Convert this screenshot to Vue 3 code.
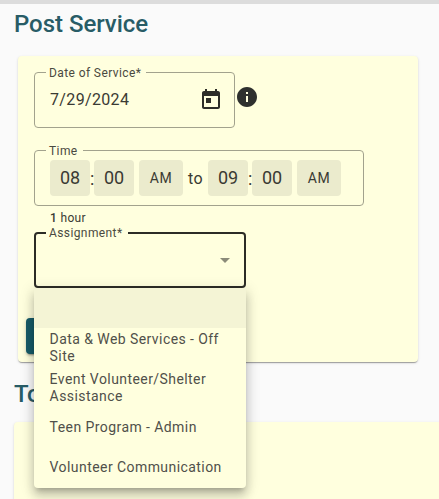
<script setup>
import { ref } from 'vue'

const options = ref([
  '',
  'Data & Web Services - Off Site',
  'Event Volunteer/Shelter Assistance',
  'Teen Program - Admin',
  'Volunteer Communication',
])
</script>

<template>
  <main class="page">
    <h2 class="title">Post Service</h2>

    <section class="card form">
      <div class="date-row">
        <div class="field date">
          <span class="label">Date of Service*</span>
          <span class="value">7/29/2024</span>
          <svg class="calendar" viewBox="0 0 24 24">
            <path d="M19 3h-1V1h-2v2H8V1H6v2H5c-1.11 0-1.99.9-1.99 2L3 19c0 1.1.89 2 2 2h14c1.1 0 2-.9 2-2V5c0-1.1-.9-2-2-2zm0 16H5V8h14v11zM7 10h5v5H7z" />
          </svg>
        </div>
        <svg class="info" viewBox="0 0 24 24">
          <path d="M12 2C6.48 2 2 6.48 2 12s4.480 10 10 10 10-4.480 10-10S17.520 2 12 2zm1 15h-2v-6h2v6zm0-8h-2V7h2v2z" />
        </svg>
      </div>

      <div class="field time">
        <span class="label">Time</span>
        <span class="chip">08</span>
        <span class="colon">:</span>
        <span class="chip">00</span>
        <span class="chip meridiem">AM</span>
        <span class="to">to</span>
        <span class="chip">09</span>
        <span class="colon">:</span>
        <span class="chip">00</span>
        <span class="chip meridiem">AM</span>
      </div>

      <div class="hint"><b>1</b> hour</div>

      <div class="field select">
        <span class="label">Assignment*</span>
        <svg class="arrow" viewBox="0 0 10 5"><path d="M0 0h10L5 5z" /></svg>
        <ul class="menu">
          <li v-for="(option, i) in options" :key="i" :class="{ active: i === 0 }">
            <span>{{ option }}</span>
          </li>
        </ul>
      </div>

      <button class="submit" type="button" aria-label="Submit"></button>
    </section>

    <h2 class="title total">To</h2>
    <section class="card summary"></section>
  </main>
</template>

<style>
body {
  background: #fafafa;
  overflow: hidden;
}
</style>

<style scoped>
.page {
  box-sizing: border-box;
  height: 499px;
  overflow: hidden;
  border-top: 4px solid #dcdcdc;
  font-family: Roboto, "Liberation Sans", sans-serif;
  color: #3a3a33;
}
.title {
  margin: 4px 0 0 14px;
  font-size: 24px;
  line-height: 32px;
  font-weight: 500;
  letter-spacing: -0.04px;
  color: #285c66;
}
.card {
  background: #ffffde;
  border-radius: 4px;
  box-shadow: 0 2px 1px -1px rgba(0, 0, 0, 0.2), 0 1px 1px rgba(0, 0, 0, 0.14),
    0 1px 3px rgba(0, 0, 0, 0.12);
}
.form {
  box-sizing: border-box;
  width: 400px;
  height: 306px;
  margin: 16px 0 0 18px;
  padding: 16px;
}
.date-row {
  display: flex;
}
.field {
  position: relative;
  box-sizing: border-box;
  display: flex;
  align-items: center;
  height: 56px;
  border: 1px solid #a2a28d;
  border-radius: 4px;
}
.label {
  position: absolute;
  top: -9px;
  left: 11px;
  padding: 0 5px 0 3px;
  background: #ffffde;
  font-size: 12px;
  line-height: 18px;
  letter-spacing: 0.4px;
  white-space: nowrap;
  color: #4a4a41;
}
.date {
  width: 201px;
  justify-content: space-between;
  padding: 0 11px 0 15px;
}
.value {
  margin-bottom: 2px;
  font-size: 16px;
  letter-spacing: 0.35px;
}
.calendar {
  width: 24px;
  height: 24px;
  fill: #2e2e28;
}
.info {
  width: 24px;
  height: 24px;
  margin: 13px 0 0;
  fill: #2e302e;
}
.time {
  width: 330px;
  margin-top: 22px;
  padding-left: 15px;
}
.chip {
  width: 40px;
  height: 36px;
  border-radius: 4px;
  background: #ebebcd;
  font-size: 18px;
  line-height: 36px;
  text-align: center;
}
.meridiem {
  width: 44px;
  margin-left: 5px;
  font-size: 14px;
  letter-spacing: 0.5px;
}
.colon {
  width: 4px;
  font-size: 18px;
}
.to {
  width: 25px;
  text-align: center;
  font-size: 16px;
  letter-spacing: 0.5px;
}
.hint {
  height: 26px;
  padding-left: 16px;
  font-size: 12px;
  line-height: 24px;
  letter-spacing: 0.33px;
}
.hint b {
  font-weight: 500;
}
.select {
  width: 212px;
  justify-content: flex-end;
  padding-right: 14px;
  border: 2px solid #2c2c26;
}
.select .label {
  top: -10px;
  left: 10px;
}
.arrow {
  width: 10px;
  height: 5px;
  fill: #8b8b79;
}
.menu {
  position: absolute;
  z-index: 2;
  top: 54px;
  left: -2px;
  width: 212px;
  margin: 0;
  padding: 0;
  list-style: none;
  background: #ffffde;
  border-radius: 0 0 4px 4px;
  box-shadow: 0 5px 5px -3px rgba(0, 0, 0, 0.2), 0 8px 10px 1px rgba(0, 0, 0, 0.14),
    0 3px 14px 2px rgba(0, 0, 0, 0.12);
}
.menu li {
  box-sizing: border-box;
  display: flex;
  align-items: center;
  height: 40px;
  padding: 0 16px 1px 15.6px;
  font-size: 14px;
  line-height: 17px;
  letter-spacing: 0.43px;
  color: #50504a;
}
.menu .active {
  background: #f4f4d5;
}
.submit {
  display: block;
  width: 64px;
  height: 36px;
  margin: 30px 0 0 -8px;
  padding: 0;
  border: 0;
  border-radius: 4px;
  background: #175b67;
  box-shadow: 0 3px 1px -2px rgba(0, 0, 0, 0.2), 0 2px 2px rgba(0, 0, 0, 0.14),
    0 1px 5px rgba(0, 0, 0, 0.12);
}
.total {
  margin-top: 16px;
}
.summary {
  height: 120px;
  margin: 12px -8px 0 14px;
}
</style>
